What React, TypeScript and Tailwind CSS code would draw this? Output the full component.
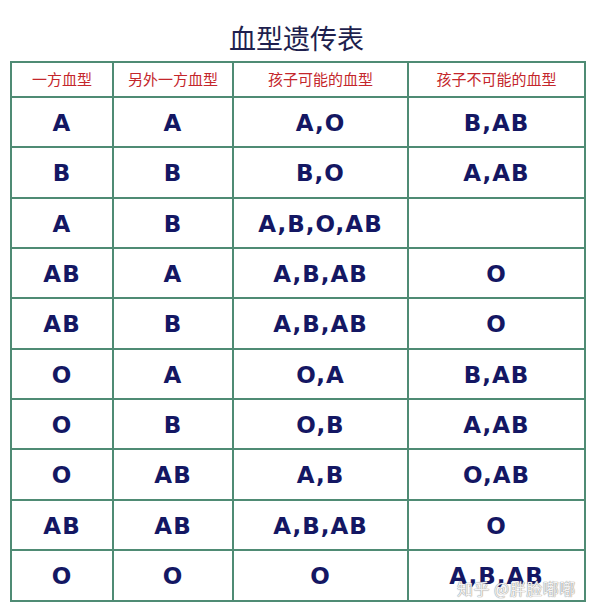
import React from "react";

const rows: [string, string, string, string][] = [
  ["A", "A", "A,O", "B,AB"],
  ["B", "B", "B,O", "A,AB"],
  ["A", "B", "A,B,O,AB", ""],
  ["AB", "A", "A,B,AB", "O"],
  ["AB", "B", "A,B,AB", "O"],
  ["O", "A", "O,A", "B,AB"],
  ["O", "B", "O,B", "A,AB"],
  ["O", "AB", "A,B", "O,AB"],
  ["AB", "AB", "A,B,AB", "O"],
  ["O", "O", "O", "A,B,AB"],
];

const heights = [
  "h-[48px]",
  "h-[49px]",
  "h-[48px]",
  "h-[48px]",
  "h-[49px]",
  "h-[48px]",
  "h-[48px]",
  "h-[49px]",
  "h-[48px]",
  "h-[49px]",
];

const headers = ["一方血型", "另外一方血型", "孩子可能的血型", "孩子不可能的血型"];

export default function App() {
  return (
    <div className="w-[599px] h-[613px] bg-white overflow-hidden relative">
      <div className="h-[61px] flex items-center justify-center pt-[14px]">
        <span className="text-[27px] leading-none text-[#1e1f4e] font-['Noto_Sans_CJK_SC',sans-serif] ml-[-6px]">
          血型遗传表
        </span>
      </div>
      <div className="ml-[10px] w-[576px] grid grid-cols-[100px_118px_173px_175px] gap-[2px] p-[2px] bg-[#4f8b74]">
        {headers.map((h, i) => (
          <div
            key={i}
            className="bg-white h-[33px] flex items-center justify-center text-[15px] text-[#c4262b] font-['Noto_Sans_CJK_SC',sans-serif]"
          >
            {h}
          </div>
        ))}
        {rows.map((r, ri) =>
          r.map((c, ci) => (
            <div
              key={ri + "-" + ci}
              className={
                "bg-white flex items-center justify-center text-[23px] font-bold text-[#141763] font-['DejaVu_Sans',sans-serif] tracking-[1px] pt-[2px] " +
                heights[ri]
              }
            >
              {c}
            </div>
          ))
        )}
      </div>
      <div className="absolute left-[457px] top-[578px] whitespace-nowrap text-[16px] leading-[21px] tracking-[0.5px] text-white/90 font-['Noto_Sans_CJK_SC',sans-serif] [text-shadow:0_0_1px_#8a8a8a,0_0_1px_#8a8a8a]">
        知乎 @胖脸嘟嘟
      </div>
    </div>
  );
}
